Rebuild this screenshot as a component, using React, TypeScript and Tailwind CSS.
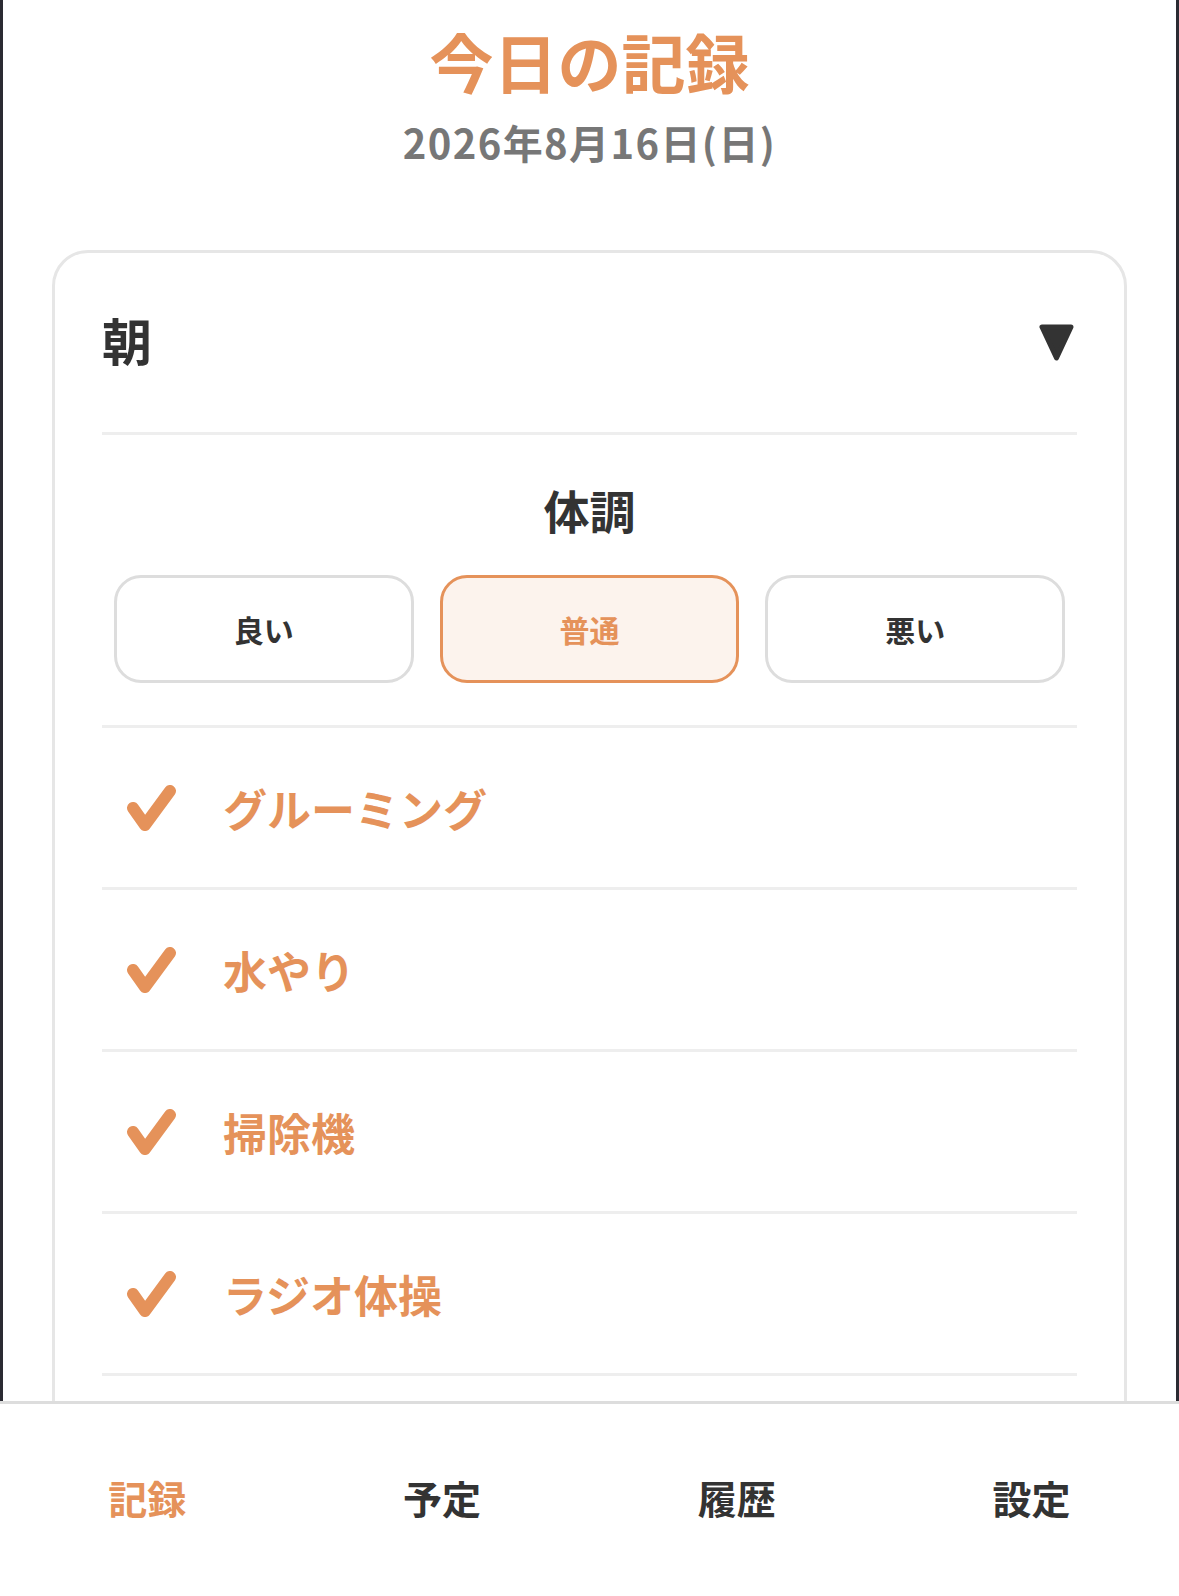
import React from "react";

const ORANGE = "text-[#e5925a]";

function Check() {
  return (
    <svg width="51" height="46" viewBox="0 0 51 46" className="shrink-0">
      <polyline
        points="7,23 19,40 44,6"
        fill="none"
        stroke="#e5925a"
        strokeWidth="12"
        strokeLinecap="round"
        strokeLinejoin="round"
      />
    </svg>
  );
}

function Triangle() {
  return (
    <svg width="37" height="37" viewBox="0 0 37 37" className="mr-[2px]">
      <path
        d="M4 3 L33 3 L18.5 34 Z"
        fill="#333333"
        stroke="#333333"
        strokeWidth="5"
        strokeLinejoin="round"
      />
    </svg>
  );
}

const tasks = ["グルーミング", "水やり", "掃除機", "ラジオ体操"];
const conditions = ["良い", "普通", "悪い"];

export default function App() {
  return (
    <div
      className="w-[1179px] h-[1596px] bg-white flex flex-col overflow-hidden"
      style={{ fontFamily: '"Noto Sans CJK JP", "Noto Sans", sans-serif' }}
    >
      <main className="flex-1 min-h-0 overflow-hidden border-x-[3px] border-[#2a2a32] flex flex-col">
        <h1 className={`pt-[20px] text-center text-[64px] leading-[80px] font-bold ${ORANGE}`}>
          今日の記録
        </h1>
        <p className="mt-[18px] text-center text-[40px] leading-[48px] font-bold tracking-[1.4px] text-[#777777]">
          2026年8月16日(日)
        </p>
        <section className="mt-[84px] mx-[49px] border-[3px] border-[#e6e6e6] rounded-[36px] px-[47px] pb-[80px] shrink-0">
          <div className="h-[182px] flex items-center justify-between border-b-[3px] border-[#eeeeee]">
            <span className="mb-[8px] text-[50px] leading-[60px] font-bold text-[#333333]">朝</span>
            <Triangle />
          </div>
          <div className="pt-[44px] pb-[42px] border-b-[3px] border-[#eeeeee] flex flex-col items-center">
            <h2 className="text-[46px] leading-[60px] font-bold text-[#333333]">体調</h2>
            <div className="mt-[36px] w-full px-[12px] grid grid-cols-3 gap-[26px]">
              {conditions.map((c) => {
                const sel = c === "普通";
                return (
                  <button
                    key={c}
                    className={
                      sel
                        ? "h-[108px] rounded-[27px] border-[3px] border-[#e5925a] bg-[#fcf3ed] text-[30px] font-bold text-[#e5925a]"
                        : "h-[108px] rounded-[27px] border-[3px] border-[#dddddd] bg-white text-[30px] font-bold text-[#333333]"
                    }
                  >
                    {c}
                  </button>
                );
              })}
            </div>
          </div>
          {tasks.map((t) => (
            <div
              key={t}
              className="h-[162px] flex items-center pl-[24px] border-b-[3px] border-[#eeeeee]"
            >
              <Check />
              <span className={`ml-[46px] text-[44px] leading-[60px] font-bold ${ORANGE}`}>{t}</span>
            </div>
          ))}
        </section>
      </main>
      <nav className="h-[195px] shrink-0 border-t-[3px] border-[#dddddd] bg-white grid grid-cols-4 items-center pb-[6px]">
        {["記録", "予定", "履歴", "設定"].map((n, i) => (
          <span
            key={n}
            className={`text-center text-[39px] font-bold ${i === 0 ? ORANGE : "text-[#333333]"}`}
          >
            {n}
          </span>
        ))}
      </nav>
    </div>
  );
}
